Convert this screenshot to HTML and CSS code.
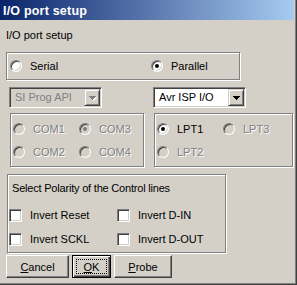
FILE: index.html
```html
<!DOCTYPE html>
<html lang="en">

<head>
    <meta charset="UTF-8">
    <meta name="viewport" content="width=device-width, initial-scale=1.0">
    <link rel="stylesheet" href="styles.css">
    <title>I/O port setup</title>
</head>

<body>
    <div class="window">
        <div class="titlebar">I/O port setup</div>
        <div class="content">
            <div class="caption">I/O port setup</div>

            <!-- serial / parallel choice -->
            <div class="group mode-group">
                <label class="option"><span class="radio"></span>Serial</label>
                <label class="option"><span class="radio checked"></span>Parallel</label>
            </div>

            <div class="combo-row">
                <div class="combo disabled">
                    <span class="combo-text">SI Prog API</span>
                    <span class="combo-btn">
                        <svg width="8" height="5" viewBox="0 0 8 5">
                            <g fill="#fff">
                                <rect x="1" y="1" width="7" height="1" />
                                <rect x="2" y="2" width="5" height="1" />
                                <rect x="3" y="3" width="3" height="1" />
                                <rect x="4" y="4" width="1" height="1" />
                            </g>
                            <g fill="#808080">
                                <rect x="0" y="0" width="7" height="1" />
                                <rect x="1" y="1" width="5" height="1" />
                                <rect x="2" y="2" width="3" height="1" />
                                <rect x="3" y="3" width="1" height="1" />
                            </g>
                        </svg>
                    </span>
                </div>
                <div class="combo">
                    <span class="combo-text">Avr ISP I/O</span>
                    <span class="combo-btn">
                        <svg width="8" height="5" viewBox="0 0 8 5">
                            <g fill="#000">
                                <rect x="0" y="0" width="7" height="1" />
                                <rect x="1" y="1" width="5" height="1" />
                                <rect x="2" y="2" width="3" height="1" />
                                <rect x="3" y="3" width="1" height="1" />
                            </g>
                        </svg>
                    </span>
                </div>
            </div>

            <div class="port-row">
                <div class="group port-group com-group">
                    <label class="option disabled"><span class="radio"></span>COM1</label>
                    <label class="option disabled"><span class="radio checked"></span>COM3</label>
                    <label class="option disabled"><span class="radio"></span>COM2</label>
                    <label class="option disabled"><span class="radio"></span>COM4</label>
                </div>
                <div class="group port-group lpt-group">
                    <label class="option"><span class="radio checked"></span>LPT1</label>
                    <label class="option disabled"><span class="radio"></span>LPT3</label>
                    <label class="option disabled"><span class="radio"></span>LPT2</label>
                </div>
            </div>

            <div class="group polarity-group">
                <div class="polarity-title">Select Polarity of the Control lines</div>
                <div class="check-grid">
                    <label class="option"><span class="check"></span>Invert Reset</label>
                    <label class="option"><span class="check"></span>Invert D-IN</label>
                    <label class="option"><span class="check"></span>Invert SCKL</label>
                    <label class="option"><span class="check"></span>Invert D-OUT</label>
                </div>
            </div>

            <div class="buttons">
                <button type="button" class="btn btn-cancel"><u>C</u>ancel</button>
                <button type="button" class="btn btn-ok default"><span class="focus"><u>O</u>K</span></button>
                <button type="button" class="btn btn-probe"><u>P</u>robe</button>
            </div>
        </div>
    </div>
</body>

</html>
```

FILE: styles.css
```css
body {
    margin: 0;
    font-family: 'Liberation Sans', Arial, sans-serif;
    font-size: 11px;
    line-height: 13px;
    color: #000;
}

.window {
    width: 297px;
    height: 285px;
    box-sizing: border-box;
    background-color: #d4d0c8;
    box-shadow: inset -1px -1px 0 #404040, inset -2px -2px 0 #808080;
    overflow: hidden;
}

.titlebar {
    width: 294px;
    height: 20px;
    box-sizing: border-box;
    padding: 2px 0 0 3px;
    line-height: 18px;
    font-size: 12.5px;
    font-weight: bold;
    letter-spacing: 0.2px;
    color: #fff;
    background: linear-gradient(to right, #0a246a, #a6caf0);
}

.content {
    padding-left: 6px;
}

.caption {
    margin-top: 9px;
}

/* etched frame */
.group {
    box-sizing: border-box;
    border: 1px solid #808080;
    box-shadow: inset 1px 1px 0 #fff, 1px 1px 0 #fff;
}

.option {
    display: flex;
    align-items: center;
    gap: 8px;
    white-space: nowrap;
}

.option.disabled {
    color: #808080;
    text-shadow: 1px 1px 0 #fff;
}

.radio {
    position: relative;
    flex: none;
    width: 12px;
    height: 12px;
    box-sizing: border-box;
    border-radius: 50%;
    border: 1px solid;
    border-color: #808080 #fff #fff #808080;
    background: #fff;
    box-shadow: inset 1px 1px 0 #404040, inset -1px -1px 0 #d4d0c8;
}

.radio.checked::after {
    content: '';
    position: absolute;
    left: 3px;
    top: 3px;
    width: 4px;
    height: 4px;
    border-radius: 50%;
    background: #000;
}

.option.disabled .radio {
    background: #d4d0c8;
}

.option.disabled .radio.checked::after {
    background: #808080;
}

.check {
    flex: none;
    width: 13px;
    height: 13px;
    box-sizing: border-box;
    border: 1px solid;
    border-color: #808080 #fff #fff #808080;
    background: #fff;
    box-shadow: inset 1px 1px 0 #404040, inset -1px -1px 0 #d4d0c8;
}

.mode-group {
    margin-top: 10px;
    width: 234px;
    height: 28px;
    padding-left: 3px;
    display: grid;
    grid-template-columns: 141px auto;
    align-items: center;
}

.combo-row {
    display: flex;
    margin: 7px 0 0 3px;
    gap: 51px;
}

.combo {
    display: flex;
    align-items: center;
    width: 93px;
    height: 21px;
    box-sizing: border-box;
    border: 1px solid;
    border-color: #808080 #fff #fff #808080;
    box-shadow: inset 1px 1px 0 #404040, inset -1px -1px 0 #d4d0c8;
    background: #fff;
    padding: 1px;
}

.combo.disabled {
    background: #d4d0c8;
    color: #808080;
}

.combo-text {
    flex: 1;
    padding-left: 4px;
    white-space: nowrap;
}

.combo-btn {
    display: flex;
    align-items: center;
    justify-content: center;
    width: 16px;
    height: 17px;
    box-sizing: border-box;
    border: 1px solid;
    border-color: #d4d0c8 #404040 #404040 #d4d0c8;
    box-shadow: inset 1px 1px 0 #fff, inset -1px -1px 0 #808080;
    background: #d4d0c8;
}

.combo-btn svg {
    display: block;
    margin: 1px 0 0 1px;
}

.port-row {
    display: flex;
    margin-top: 5px;
    padding-left: 4px;
    gap: 10px;
}

.port-group {
    height: 54px;
    padding: 9px 0 0 2px;
    display: grid;
    grid-template-columns: 66px auto;
    grid-auto-rows: 12px;
    row-gap: 11px;
    align-content: start;
}

.com-group {
    width: 134px;
}

.lpt-group {
    width: 139px;
}

.polarity-group {
    margin: 7px 0 0 1px;
    width: 219px;
    height: 79px;
}

.polarity-title {
    margin: 7px 0 0 4px;
    letter-spacing: -0.2px;
}

.check-grid {
    margin-top: 14px;
    padding-left: 1px;
    display: grid;
    grid-template-columns: 108px auto;
    grid-auto-rows: 13px;
    row-gap: 11px;
}

.buttons {
    display: flex;
    gap: 3px;
    margin-top: 2px;
}

.btn {
    height: 23px;
    box-sizing: border-box;
    padding: 0;
    font-family: inherit;
    font-size: 11px;
    color: #000;
    background: #d4d0c8;
    border: 1px solid;
    border-color: #fff #404040 #404040 #fff;
    box-shadow: inset -1px -1px 0 #808080, inset 1px 1px 0 #d4d0c8;
}

.btn-cancel {
    width: 63px;
}

.btn-probe {
    width: 58px;
}

.btn-ok {
    width: 39px;
    padding: 3px;
    display: flex;
}

.btn.default {
    border: 1px solid #000;
    box-shadow: inset 1px 1px 0 #fff, inset -1px -1px 0 #404040, inset -2px -2px 0 #808080;
}

.focus {
    flex: 1;
    display: flex;
    align-items: center;
    justify-content: center;
    border: 1px dotted #000;
}
```
